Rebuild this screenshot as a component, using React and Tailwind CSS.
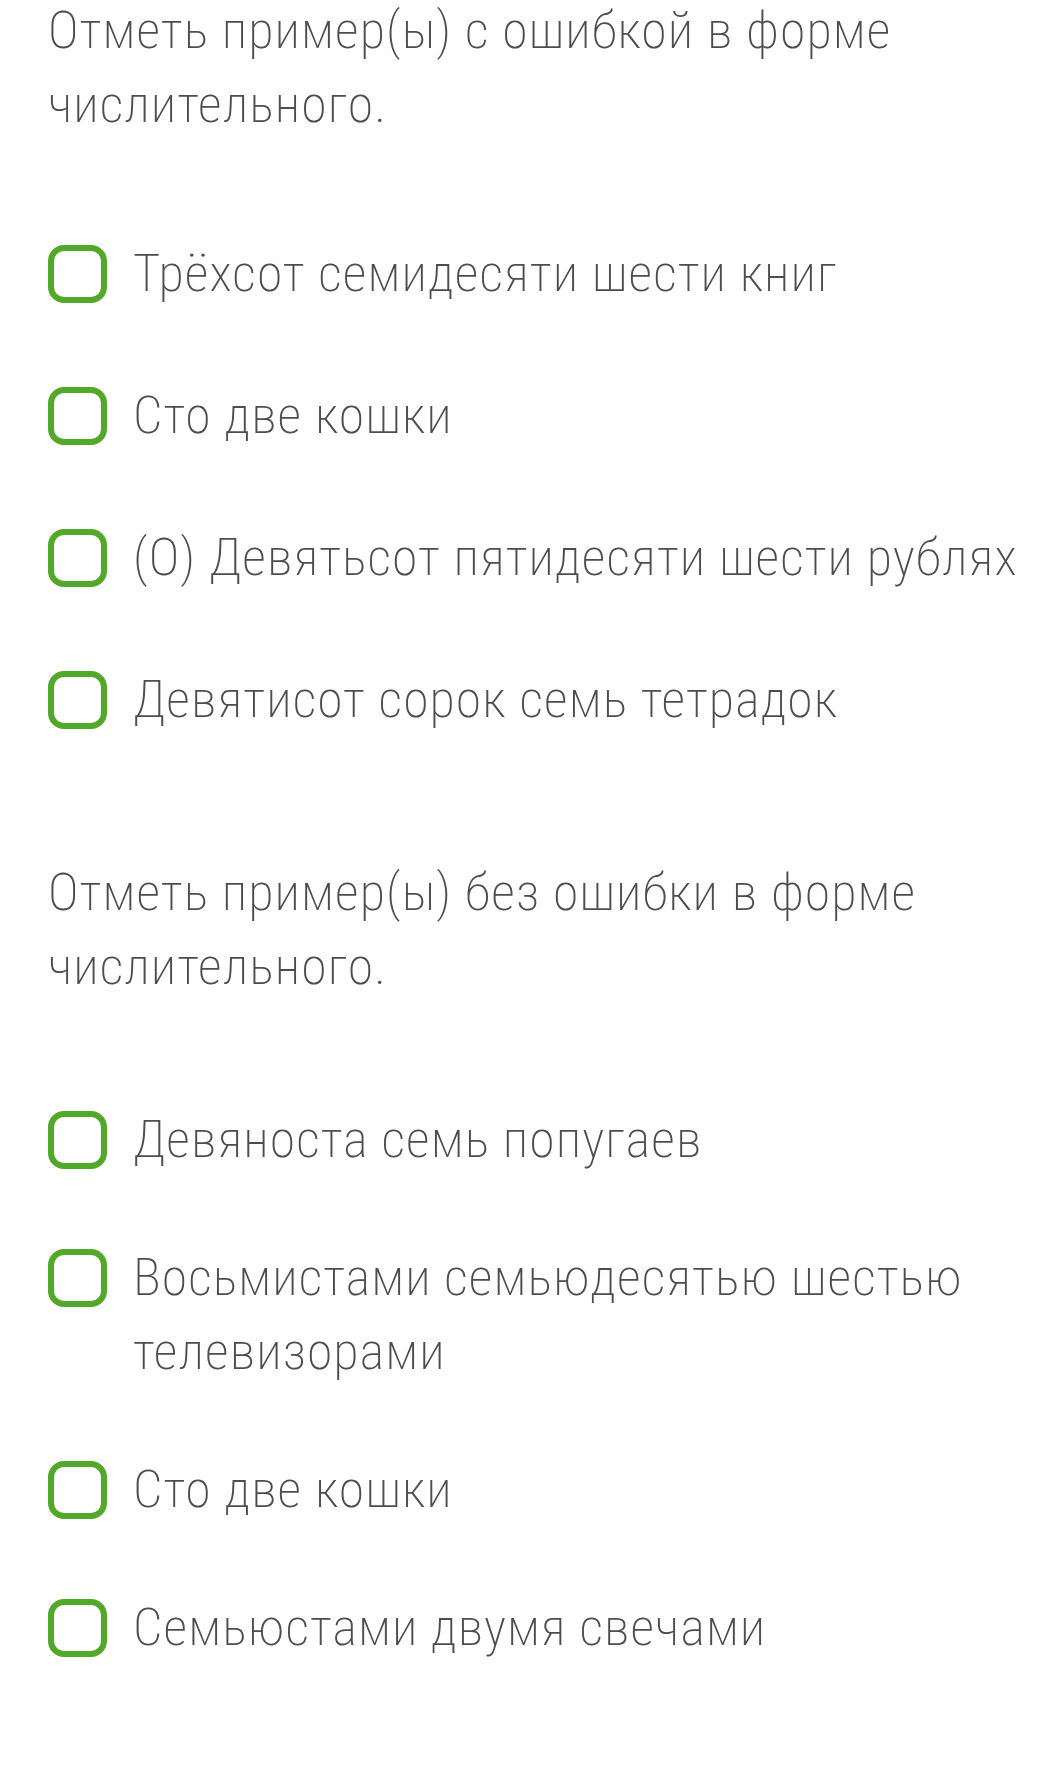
const groups = [
  {
    title: 'Отметь пример(ы) с ошибкой в форме числительного.',
    items: [
      'Трёхсот семидесяти шести книг',
      'Сто две кошки',
      '(О) Девятьсот пятидесяти шести рублях',
      'Девятисот сорок семь тетрадок',
    ],
  },
  {
    title: 'Отметь пример(ы) без ошибки в форме числительного.',
    items: [
      'Девяноста семь попугаев',
      'Восьмистами семьюдесятью шестью телевизорами',
      'Сто две кошки',
      'Семьюстами двумя свечами',
    ],
  },
]

function Option({ label }) {
  return (
    <label className="flex items-start gap-[26px] cursor-pointer">
      <span className="mt-[8px] h-[58px] w-[59px] shrink-0 rounded-[16px] border-[6px] border-[#52a828] bg-white" />
      <span>{label}</span>
    </label>
  )
}

export default function App() {
  return (
    <div className="h-[1766px] w-[1050px] overflow-hidden bg-white pl-[48px] pr-[20px] font-['Roboto','Liberation_Sans',sans-serif] text-[52px] font-extralight leading-[74px] tracking-[1.1px] text-[#4d4d4d] [font-stretch:condensed]">
      <h2 className="-mt-[6px] font-extralight">{groups[0].title}</h2>
      <div className="mt-[95px] flex flex-col gap-[68px]">
        {groups[0].items.map((item, i) => (
          <Option key={i} label={item} />
        ))}
      </div>
      <h2 className="mt-[119px] font-extralight">{groups[1].title}</h2>
      <div className="mt-[99px] flex flex-col gap-[64px]">
        {groups[1].items.map((item, i) => (
          <Option key={i} label={item} />
        ))}
      </div>
    </div>
  )
}
